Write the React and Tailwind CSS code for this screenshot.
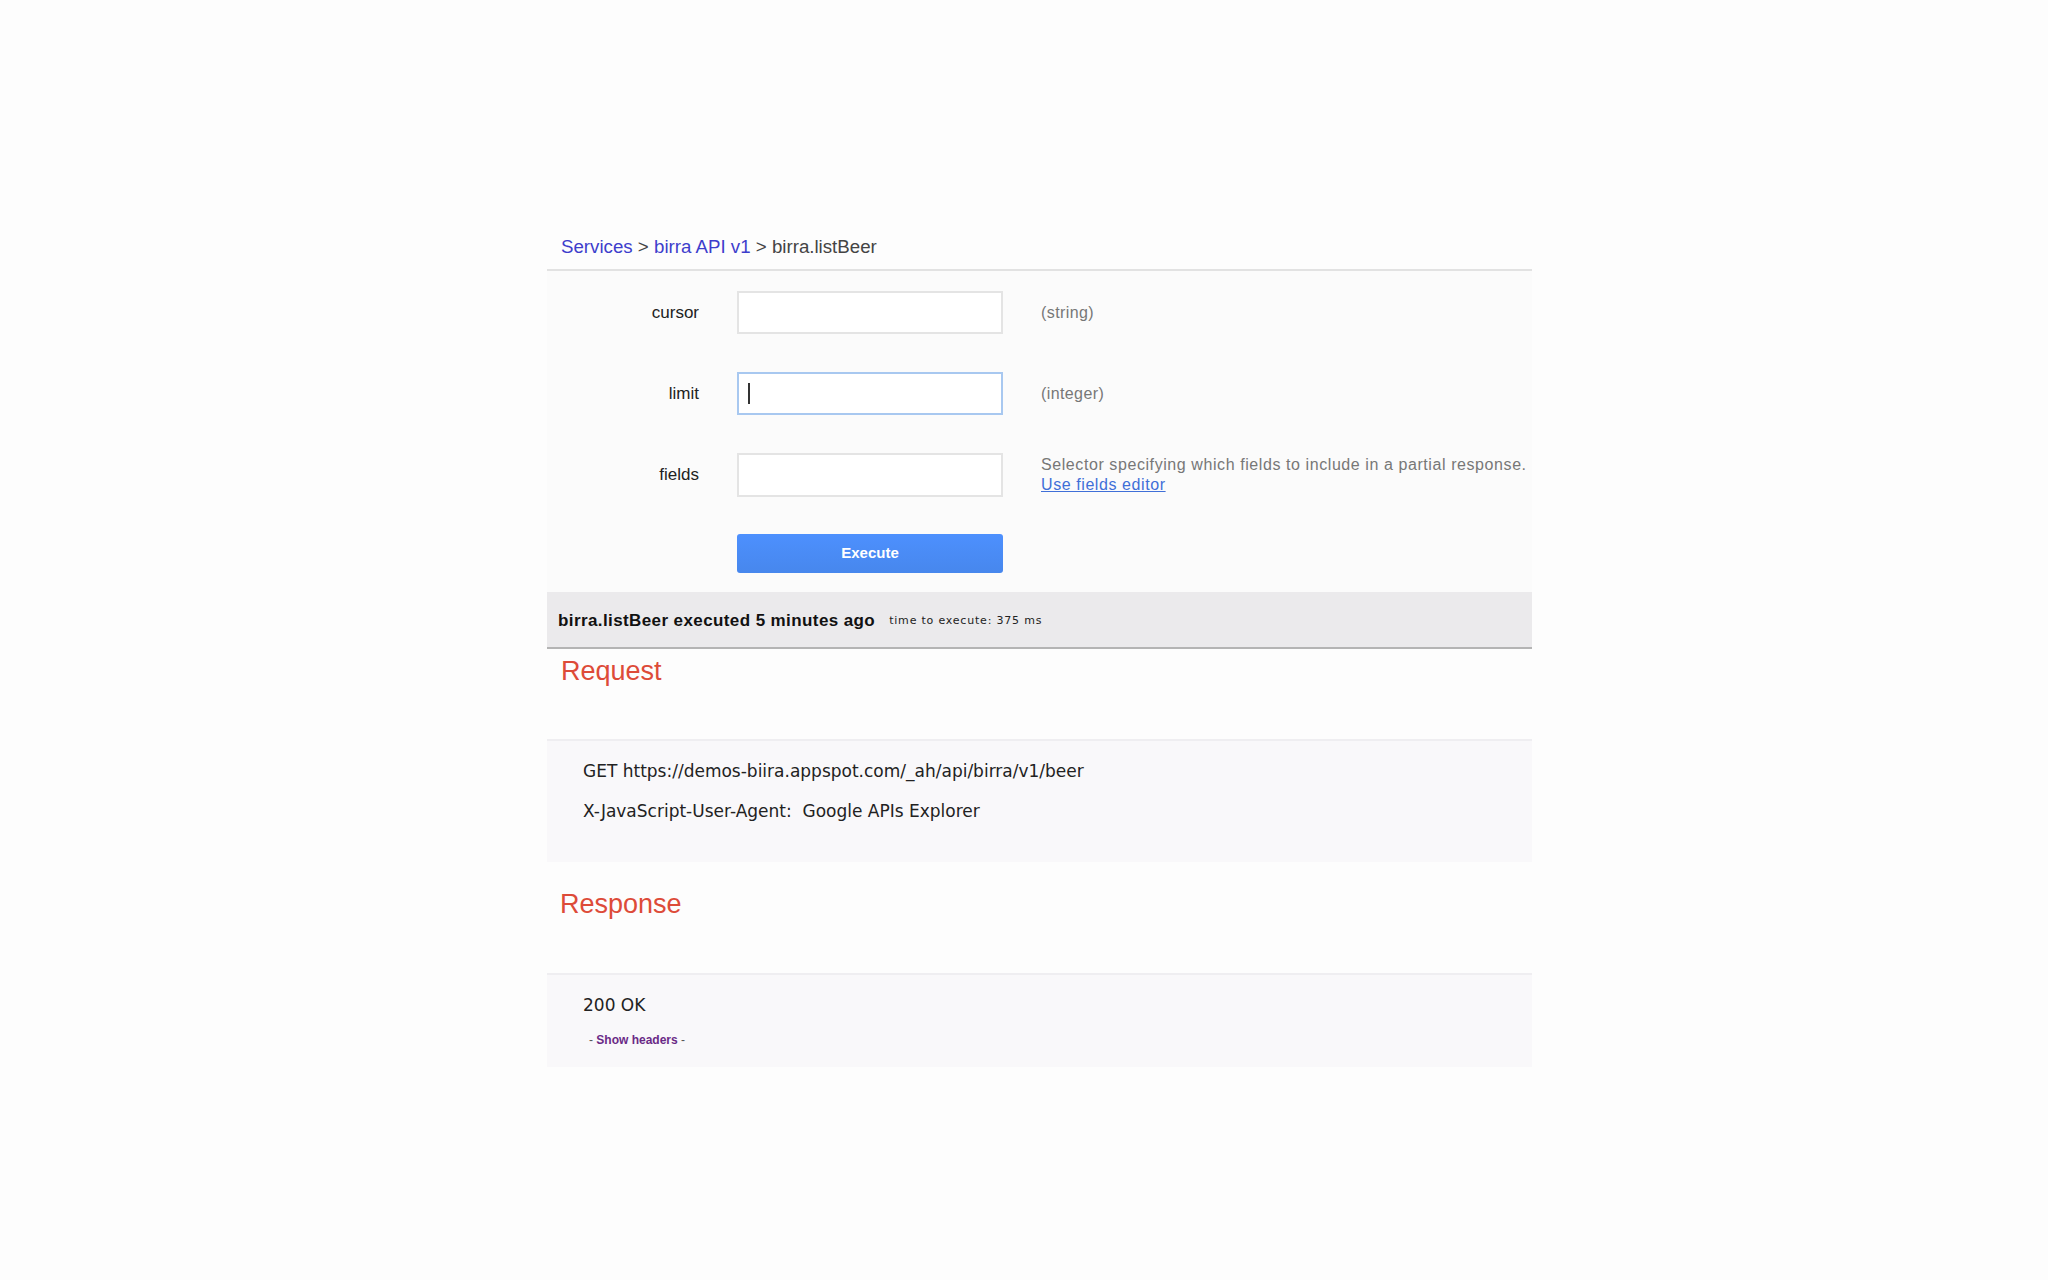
export default function App() {
  const params = [
    { name: 'cursor', hint: '(string)' },
    { name: 'limit', hint: '(integer)', focused: true },
  ];

  return (
    <div className="min-h-[1280px] w-full bg-[#fdfdfd] font-['Liberation_Sans',Arial,sans-serif]">
      <div className="ml-[547px] w-[985px] pt-[231px]">
        {/* Breadcrumb */}
        <div className="border-b-2 border-[#e2e2e2] pb-[6px] pl-[14px] text-[18.7px] leading-[32px] text-[#444]">
          <a className="text-[#3d3dcc]">Services</a>
          <span> &gt; </span>
          <a className="text-[#3d3dcc]">birra API v1</a>
          <span> &gt; birra.listBeer</span>
        </div>

        {/* Parameters form */}
        <div className="bg-[#fbfbfb] pt-[20px] pb-[19px]">
          {params.map((p) => (
            <div key={p.name} className="mb-[38px] flex h-[43px] items-center">
              <label className="w-[152px] text-right text-[17px] text-[#222]">{p.name}</label>
              <div
                className={
                  p.focused
                    ? 'ml-[38px] flex h-[43px] w-[266px] items-center border-2 border-[#a8c8f0] bg-white px-[9px]'
                    : 'ml-[38px] h-[43px] w-[266px] border-2 border-[#e4e4e4] bg-white'
                }
              >
                {p.focused && <span className="h-[21px] w-[2px] bg-[#333]" />}
              </div>
              <span className="ml-[38px] text-[16px] tracking-[0.4px] text-[#777]">{p.hint}</span>
            </div>
          ))}

          <div className="flex h-[44px] items-center">
            <label className="w-[152px] text-right text-[17px] text-[#222]">fields</label>
            <div className="ml-[38px] h-[44px] w-[266px] border-2 border-[#e4e4e4] bg-white" />
            <div className="ml-[38px] text-[16px] leading-[20px] tracking-[0.58px] text-[#777]">
              <div>Selector specifying which fields to include in a partial response.</div>
              <a className="text-[#3f6fd8] underline">Use fields editor</a>
            </div>
          </div>

          <div className="ml-[190px] mt-[37px]">
            <button className="h-[39px] w-[266px] rounded-[3px] bg-gradient-to-b from-[#4d90fe] to-[#4787ed] text-[15px] font-bold text-white">
              Execute
            </button>
          </div>
        </div>

        {/* Execution status */}
        <div className="flex h-[57px] items-center border-b-2 border-[#b4b4b4] bg-[#ebeaec] pl-[11px] pt-[3px]">
          <span className="text-[17px] font-bold tracking-[0.4px] text-[#111]">
            birra.listBeer executed 5 minutes ago
          </span>
          <span className="ml-[14px] font-['DejaVu_Sans',sans-serif] text-[11px] tracking-[0.8px] text-[#222]">
            time to execute: 375 ms
          </span>
        </div>

        {/* Request */}
        <div className="h-[90px] pl-[14px] pt-[5px]">
          <h2 className="text-[27px] leading-[34px] text-[#dd4b39]">Request</h2>
        </div>
        <div className="h-[123px] border-t-2 border-[#efeef1] bg-[#f9f8fa] pl-[36px] pt-[15px] font-['DejaVu_Sans',sans-serif] text-[17px] text-[#222]">
          <div className="leading-[30px]">GET https://demos-biira.appspot.com/_ah/api/birra/v1/beer</div>
          <div className="mt-[10px] leading-[30px]">X-JavaScript-User-Agent:&nbsp; Google APIs Explorer</div>
        </div>

        {/* Response */}
        <div className="h-[111px] pl-[13px] pt-[25px]">
          <h2 className="text-[27px] leading-[34px] text-[#dd4b39]">Response</h2>
        </div>
        <div className="h-[94px] border-t-2 border-[#efeef1] bg-[#f9f8fa] pl-[36px] pt-[16px]">
          <div className="font-['DejaVu_Sans',sans-serif] text-[17px] leading-[28px] text-[#222]">200 OK</div>
          <div className="ml-[6px] mt-[13px] text-[12px] leading-[16px] text-[#555]">
            - <a className="font-bold text-[#6a2a86]">Show headers</a> -
          </div>
        </div>
      </div>
    </div>
  );
}
